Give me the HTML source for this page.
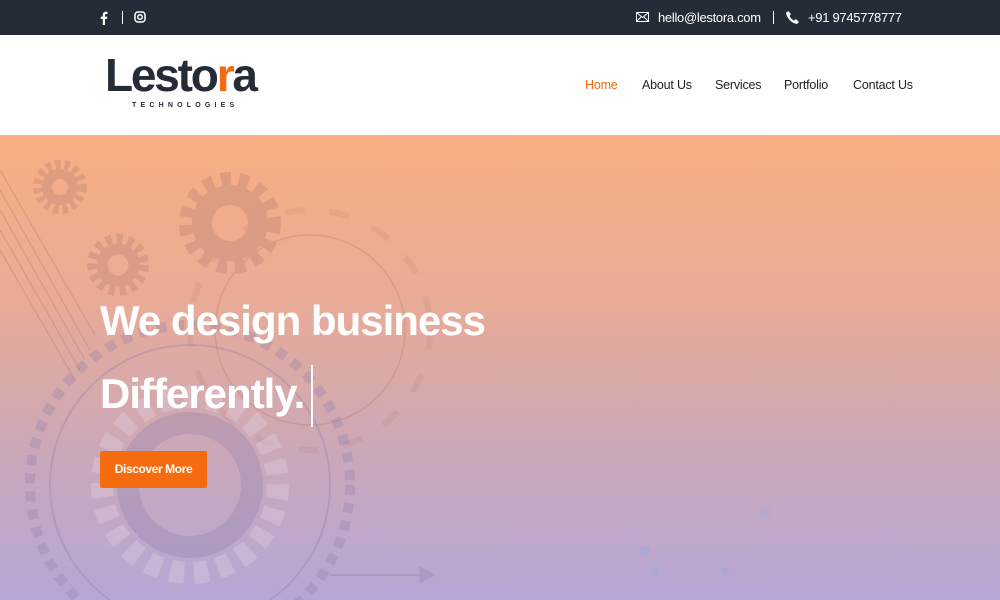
<!DOCTYPE html>
<html><head><meta charset="utf-8"><style>
*{margin:0;padding:0;box-sizing:border-box}
html,body{width:1000px;height:600px;overflow:hidden}
body{font-family:"Liberation Sans",sans-serif;position:relative;background:#fff}
.top{position:absolute;left:0;top:0;width:1000px;height:35px;background:#252b37;color:#fff;font-size:13px;letter-spacing:-.3px}
.hdr{position:absolute;top:35px;left:0;width:1000px;height:100px;background:#fff}
.hero{position:absolute;top:135px;left:0;width:1000px;height:465px;background:linear-gradient(180deg,#f9ae82 0%,#e9ab96 35%,#c9a8bb 70%,#b6a7d6 100%);overflow:hidden}
.nav{position:absolute;top:78px;font-size:12.5px;color:#222;letter-spacing:-.2px}
h1{position:absolute;left:100px;color:#fff;font-weight:bold;font-size:42px;letter-spacing:-1px;white-space:nowrap}
</style></head><body>
<div class="top">
<svg style="position:absolute;left:100px;top:11px" width="8" height="14" viewBox="0 0 8 14"><path d="M5 14V8h2l.4-2.4H5V4.2c0-.7.3-1.2 1.3-1.2H7.5V.9C7.2.8 6.5.7 5.8.7 4 .7 2.8 1.8 2.8 3.8v1.8H.8V8h2v6z" fill="#fff"/></svg>
<div style="position:absolute;left:122px;top:11px;width:1px;height:13px;background:#fff"></div>
<svg style="position:absolute;left:134px;top:11px" width="12" height="12" viewBox="0 0 12 12"><rect x="1" y="1" width="10" height="10" rx="3" fill="none" stroke="#fff" stroke-width="1.5"/><circle cx="6" cy="6" r="2.3" fill="none" stroke="#fff" stroke-width="1.5"/></svg>
<svg style="position:absolute;left:636px;top:12px" width="13" height="10" viewBox="0 0 13 10"><rect x=".5" y=".5" width="12" height="9" fill="none" stroke="#fff"/><path d="M.5 .5l6 5 6-5M.5 9.5l4.5-4.5M12.5 9.5L8 5" fill="none" stroke="#fff"/></svg>
<span style="position:absolute;left:658px;top:10px">hello@lestora.com</span>
<div style="position:absolute;left:773px;top:11px;width:1px;height:13px;background:#fff"></div>
<svg style="position:absolute;left:786px;top:10px" width="13" height="14" viewBox="0 0 13 14"><path d="M2 1l3 3-1.5 2c1 2 2.5 3.5 4.5 4.5L10 9l3 3-2 2C5 13 1 8 0 3z" fill="#fff"/></svg>
<span style="position:absolute;left:808px;top:10px">+91 9745778777</span>
</div>
<div class="hdr">
<div style="position:absolute;left:105px;top:14px;font-size:46px;font-weight:bold;color:#252b37;letter-spacing:-2.2px;line-height:52px">Lesto<span style="color:#f26a12">r</span>a</div>
<div style="position:absolute;left:132px;top:67px;font-size:7px;font-weight:bold;letter-spacing:4.2px;color:#252b37">TECHNOLOGIES</div>
</div>
<span class="nav" style="left:585px;color:#f26a12">Home</span>
<span class="nav" style="left:642px">About Us</span>
<span class="nav" style="left:715px">Services</span>
<span class="nav" style="left:784px">Portfolio</span>
<span class="nav" style="left:853px">Contact Us</span>
<div class="hero">
<svg width="1000" height="465" style="position:absolute;left:0;top:0">
<g fill="none" stroke="#b07a70" opacity=".3">
<circle cx="60" cy="52" r="22" stroke-width="10" stroke-dasharray="5 4"/><circle cx="60" cy="52" r="13" stroke-width="10"/>
<circle cx="118" cy="130" r="26" stroke-width="10" stroke-dasharray="6 5"/><circle cx="118" cy="130" r="16" stroke-width="11"/>
<circle cx="230" cy="88" r="44" stroke-width="14" stroke-dasharray="10 8"/><circle cx="230" cy="88" r="28" stroke-width="20"/>
<circle cx="310" cy="195" r="120" stroke-width="6" stroke-dasharray="20 25" opacity=".5"/>
<circle cx="310" cy="195" r="95" stroke-width="1.5"/>
<path d="M0 35l95 165M0 55l90 160M0 75l85 150M0 95l80 140M0 115l75 130" stroke-width="1.5"/>
</g>
<g fill="none" stroke="#8e7eaa" opacity=".3">
<circle cx="190" cy="350" r="62" stroke-width="22"/>
<circle cx="190" cy="350" r="88" stroke-width="22" stroke-dasharray="14 10" stroke="#e8d8e8"/>
<circle cx="190" cy="350" r="140" stroke-width="2"/>
<circle cx="190" cy="350" r="160" stroke-width="10" stroke-dasharray="10 8"/>
<path d="M330 440h100" stroke-width="2"/><path d="M420 432l15 8-15 8z" fill="#8e7eaa"/>
</g>
<g fill="#a4a8d8" opacity=".6"><circle cx="645" cy="416" r="5"/><circle cx="655" cy="436" r="4"/><circle cx="725" cy="436" r="4"/><circle cx="765" cy="377" r="5"/></g>
</svg>
<h1 style="top:162px">We design business</h1>
<h1 style="top:235px">Differently.</h1>
<div style="position:absolute;left:311px;top:230px;width:2px;height:62px;background:#fff"></div>
<div style="position:absolute;left:100px;top:316px;width:107px;height:37px;background:#f56c10;border-radius:2px;color:#fff;font-size:12px;font-weight:bold;text-align:center;line-height:37px;letter-spacing:-.4px">Discover More</div>
</div>
</body></html>
